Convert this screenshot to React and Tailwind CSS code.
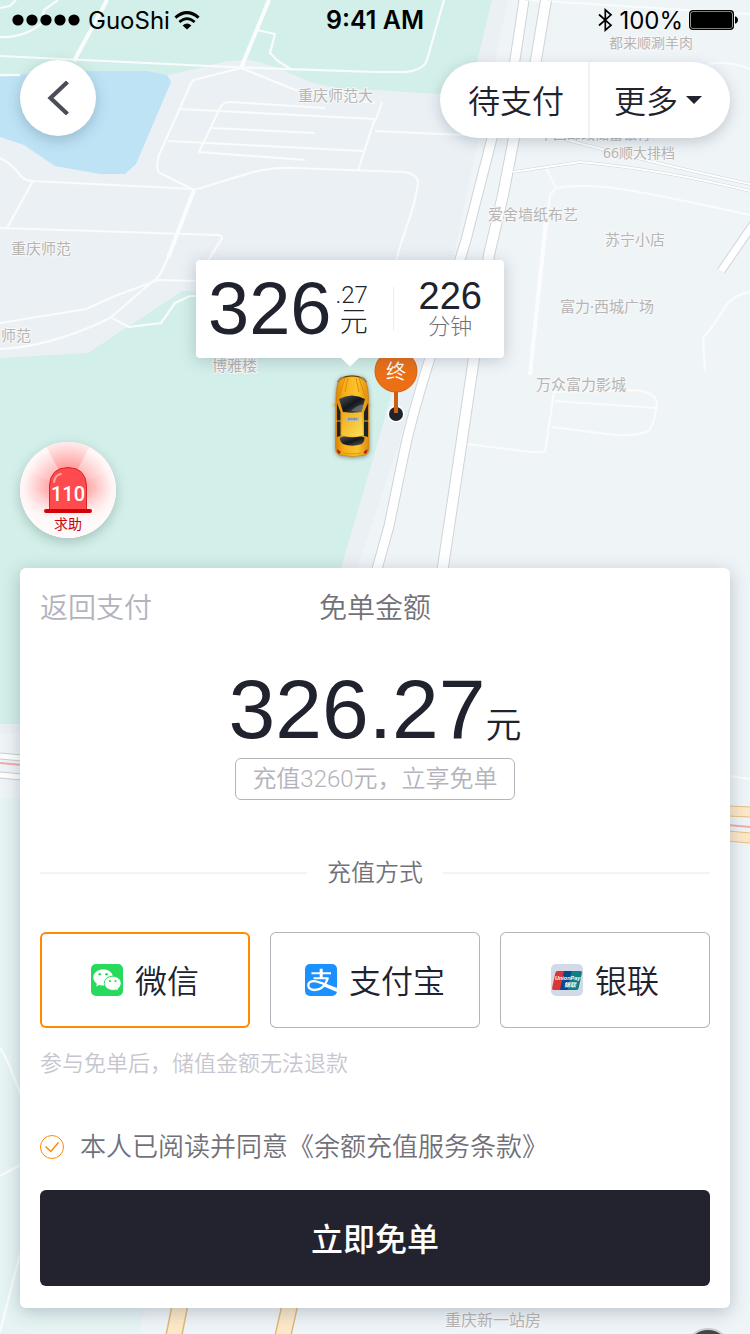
import { useState } from "react";

const MAP_LABELS = [
  { text: "都来顺涮羊肉", x: 609, y: 48, size: 14 },
  { text: "重庆师范大", x: 298, y: 101, size: 15 },
  { text: "中国邮政储蓄银行", x: 539, y: 139, size: 14 },
  { text: "66顺大排档", x: 603, y: 158, size: 14 },
  { text: "爱舍墙纸布艺", x: 488, y: 220, size: 15 },
  { text: "苏宁小店", x: 605, y: 245, size: 15 },
  { text: "重庆师范", x: 11, y: 254, size: 15 },
  { text: "富力·西城广场", x: 560, y: 312, size: 15 },
  { text: "师范", x: 1, y: 341, size: 15 },
  { text: "博雅楼", x: 212, y: 371, size: 15 },
  { text: "万众富力影城", x: 536, y: 390, size: 15 },
  { text: "重庆新一站房", x: 445, y: 1326, size: 16 },
];

const LANES = [
  "M0 56 L230 67 L375 72",
  "M107 0 L74 61",
  "M269 0 L241 68",
  "M257 30 L275 34 L270 53 L278 61 L292 70",
  "M58 0 L44 10 L43 18",
  "M0 37 C18 38 34 31 43 22",
  "M16 0 L10 6 L0 8",
  "M0 75 L20 75",
  "M241 68 L194 80 Q191 82 188 90 L159 155 Q155 170 160 173 L194 190 L166 262 Q160 278 152 282 L110 318 C70 338 30 348 0 349",
  "M241 68 L298 91 L375 103",
  "M180 109 L375 119",
  "M325 108 L230 102 Q223 102 220 108 L199 152 L305 160",
  "M211 128 L315 133",
  "M168 141 L363 151",
  "M375 118 L358 171",
  "M194 190 L250 173 Q270 167 295 168 L404 172 Q418 174 418 183 C414 215 403 230 396 262",
  "M0 158 Q12 164 20 175 Q25 181 32 181 L194 189",
  "M33 181 L7 228",
  "M0 228 L218 235 Q224 236 221 240 L207 262",
  "M0 323 L86 309 L115 296 L158 280 L196 281",
  "M112 318 L129 327 L161 323 L175 303 L190 296 L200 296",
  "M375 72 L405 72 Q424 70 427 60 L444 0",
  "M375 131 L440 134 L490 136",
  "M382 102 L375 122",
  "M546 168 L556 188 L550 195 L530 375",
  "M556 188 C600 180 660 196 750 215",
  "M527 0 L750 14",
  "M708 64 Q728 60 750 69",
  "M705 371 L703 338 L714 324 L727 304 Q736 294 750 292",
  "M467 444 L515 450 Q535 453 545 452 L554 392 L635 390 Q654 392 657 402 Q655 424 648 431 Q638 436 615 435 L552 427",
  "M555 401 L656 408",
  "M0 1048 C10 1062 14 1080 24 1102",
  "M0 1176 L22 1164",
  "M0 1332 L20 1254",
  "M730 776 L750 779",
];

function MapCanvas() {
  return (
    <svg
      className="absolute inset-0 h-full w-full"
      viewBox="0 0 750 1334"
      preserveAspectRatio="xMidYMin slice"
      aria-hidden="true"
    >
      <rect width="750" height="1334" fill="#ebf0f5" />
      <path d="M508 0 H750 V1334 H138 L357 568 L400 440 L455 250 Z" fill="#eff4f7" />
      <path d="M0 0 H492 L477 62 L466 95 L437 94 L375 90 Q330 90 305 80 Q262 60 245 60 Q225 60 200 68 L168 75 L0 77 Z" fill="#d3efe9" />
      <path d="M0 77 L60 71 L146 71 L167 75 L171 82 L136 164 L125 174 L100 174 L55 166 L24 145 L0 137 Z" fill="#bde3f5" />
      <path d="M0 358 L88 353 L182 291 L250 294 L405 345 L392 393 L375 452 L341 568 V724 H0 Z" fill="#d3efe9" />
      <rect y="733" width="22" height="65" fill="#eff4f7" />
      <path d="M0 798 H200 L138 1334 H0 Z" fill="#e6f4f3" />
      <g fill="none" stroke="#fafcfc" strokeWidth="2.2" strokeLinejoin="round">
        {LANES.map((d) => (
          <path key={d} d={d} />
        ))}
      </g>
      <g fill="none" stroke="#fbfcfd" strokeWidth="4">
        <path d="M194 190 L168 258" />
        <path d="M269 0 L241 68" />
        <path d="M107 0 L74 61" />
        <path d="M546 220 L530 375" />
      </g>
      <g fill="none">
        <g stroke="#cdd5d8">
          <path d="M524 0 L515 60 Q508 92 492 138 L466 240 L430 358 Q412 415 404 453 L389 526 L374 580" strokeWidth="11" />
          <path d="M546 0 L536 60 L514 138 L503 195 L489 255 L474 358 L460 453 L441 580" strokeWidth="12" />
          <path d="M721 271 L754 223" strokeWidth="9" />
          <path d="M513 172 L580 162 Q660 169 750 191" strokeWidth="3" />
          <path d="M560 138 Q640 160 750 184" strokeWidth="3" />
        </g>
        <g stroke="#ffffff">
          <path d="M524 0 L515 60 Q508 92 492 138 L466 240 L430 358 Q412 415 404 453 L389 526 L374 580" strokeWidth="9" />
          <path d="M546 0 L536 60 L514 138 L503 195 L489 255 L474 358 L460 453 L441 580" strokeWidth="10" />
          <path d="M721 271 L754 223" strokeWidth="7" />
          <path d="M513 172 L580 162 Q660 169 750 191" strokeWidth="2" />
          <path d="M560 138 Q640 160 750 184" strokeWidth="2" />
        </g>
      </g>
      <g fill="none">
        <path d="M0 756 L22 758 M0 775 L22 777" stroke="#c9cfd1" strokeWidth="7" />
        <path d="M0 756 L22 758 M0 775 L22 777" stroke="#ffffff" strokeWidth="5" />
        <path d="M0 763 L22 765" stroke="#f4aaa6" strokeWidth="2" />
        <path d="M728 811 L750 812 M728 836 L750 838" stroke="#e6bf82" strokeWidth="11" />
        <path d="M728 811 L750 812 M728 836 L750 838" stroke="#fde8c8" strokeWidth="9" />
        <path d="M728 825 L750 827" stroke="#f4aaa6" strokeWidth="2" />
        <path d="M181 1300 L173 1340 M291 1300 L282 1340" stroke="#e0b877" strokeWidth="17" />
        <path d="M181 1300 L173 1340 M291 1300 L282 1340" stroke="#fde8c8" strokeWidth="14" />
      </g>
      <g
        fill="#b8b4b2"
        stroke="#f6f8f9"
        strokeWidth="2"
        paintOrder="stroke"
        className="font-['Noto_Sans','Noto_Sans_CJK_SC',sans-serif] font-normal"
      >
        {MAP_LABELS.map((l) => (
          <text key={l.text} x={l.x} y={l.y} fontSize={l.size}>
            {l.text}
          </text>
        ))}
      </g>
      <circle cx="708" cy="1351" r="22" fill="#454547" stroke="#c9cbcd" strokeWidth="2" />
    </svg>
  );
}

function StatusBar() {
  return (
    <header className="relative grid h-10 grid-cols-3 items-center px-3 font-['Inter',sans-serif] text-2xl font-normal text-black">
      <div className="flex items-center gap-2">
        <svg width="68" height="12" viewBox="0 0 68 12" aria-hidden="true">
          <circle cx="6" cy="6" r="5.6" />
          <circle cx="20" cy="6" r="5.6" />
          <circle cx="34" cy="6" r="5.6" />
          <circle cx="48" cy="6" r="5.6" />
          <circle cx="62" cy="6" r="5.6" />
        </svg>
        <div className="flex items-center gap-1">
          <span className="pt-0.5">GuoShi</span>
          <svg width="26" height="19" viewBox="0 0 26 19" fill="none" stroke="#000" aria-label="Wi-Fi">
            <path d="M1.4 6.6 Q13 -3.4 24.6 6.6" strokeWidth="3" />
            <path d="M5.4 11 Q13 4.2 20.6 11" strokeWidth="2.8" />
            <path d="M8.6 14.4 Q13 10.8 17.4 14.4 L13 18.6 Z" fill="#000" stroke="none" />
          </svg>
        </div>
      </div>
      <span className="pt-0.5 text-center text-[25px] font-semibold">9:41 AM</span>
      <div className="flex items-center justify-end gap-1.5">
        <svg width="15" height="24" viewBox="0 0 15 24" fill="none" stroke="#000" strokeWidth="1.7" aria-label="蓝牙">
          <path d="M1 6.5 L13 17.2 L7.3 22.2 V1.8 L13 6.8 L1 17.5" />
        </svg>
        <span className="pt-0.5">100%</span>
        <svg width="49" height="20" viewBox="0 0 49 20" aria-label="电量">
          <rect x="0.7" y="0.7" width="43.6" height="18.6" rx="3" fill="#fff" stroke="#000" strokeWidth="1.4" />
          <rect x="2" y="2" width="41" height="16" rx="1.5" fill="#000" />
          <path d="M46 6.5 H47 Q49 7.5 49 10 Q49 12.5 47 13.5 H46 Z" />
        </svg>
      </div>
    </header>
  );
}

function TopNav() {
  return (
    <nav className="relative mt-5 flex h-[78px] justify-between px-5">
      <button
        type="button"
        aria-label="返回"
        className="flex size-[76px] items-center justify-center self-start rounded-full bg-white shadow-[0_4px_14px_rgba(60,80,100,0.28)]"
      >
        <svg width="24" height="34" viewBox="0 0 24 34" fill="none" stroke="#4c4d5b" strokeWidth="4.2">
          <path d="M21.5 1 L4.5 17 L21.5 33" />
        </svg>
      </button>
      <div className="flex h-[76px] self-end overflow-hidden rounded-full bg-white text-[32px] shadow-[0_4px_14px_rgba(60,80,100,0.25)]">
        <button type="button" className="border-r-2 border-[#f1f1f8] pl-7 pr-6 pt-1">
          待支付
        </button>
        <button type="button" className="flex items-center gap-2 pl-6 pr-7">
          <span className="pt-1">更多</span>
          <svg width="16" height="8" viewBox="0 0 16 8" fill="#20222e" aria-hidden="true">
            <path d="M0 0 H16 L8 8 Z" />
          </svg>
        </button>
      </div>
    </nav>
  );
}

function Taxi() {
  return (
    <svg
      className="absolute left-[331px] top-[236px] drop-shadow-[0_1px_2px_rgba(0,0,0,0.4)]"
      width="42"
      height="84"
      viewBox="0 0 42 84"
      aria-label="车辆位置"
    >
      <defs>
        <linearGradient id="taxi-body" x1="0" x2="1">
          <stop offset="0" stopColor="#d98307" />
          <stop offset="0.25" stopColor="#f6ae18" />
          <stop offset="0.65" stopColor="#fbc52d" />
          <stop offset="1" stopColor="#e08a08" />
        </linearGradient>
        <linearGradient id="taxi-glass" x1="0" y1="0" x2="1" y2="1">
          <stop offset="0" stopColor="#4c5257" />
          <stop offset="0.5" stopColor="#15171a" />
          <stop offset="1" stopColor="#575d61" />
        </linearGradient>
        <linearGradient id="taxi-roof" x1="0" y1="0" x2="1" y2="1">
          <stop offset="0" stopColor="#f3a916" />
          <stop offset="1" stopColor="#fae05a" />
        </linearGradient>
      </defs>
      <path d="M2 31 L7 28 V33 Z M40 31 L35 28 V33 Z" fill="#f2a412" />
      <path d="M9 4 Q21 -0.5 33 4 Q37 10 37.5 22 L38 72 Q38 80 34 81 Q21 84 9 81 Q4.5 80 4.5 72 L5 22 Q5.5 10 9 4 Z" fill="url(#taxi-body)" stroke="#c77a08" strokeWidth="0.6" />
      <path d="M6.5 8 Q8 4 14 3 L11 5 Q8 6 6.5 8 Z M35.5 8 Q34 4 28 3 L31 5 Q34 6 35.5 8 Z" fill="#dfe4e6" stroke="#574018" strokeWidth="0.6" />
      <path d="M14 2.8 Q21 1.2 28 2.8" fill="none" stroke="#5d3b08" strokeWidth="1.2" />
      <path d="M14 4 L8 22 M28 4 L34 22 M17 4 L14 18 M25 4 L28 18" stroke="#dc8507" strokeWidth="0.9" />
      <path d="M8 25 Q21 18 34 25 L30.5 38 Q21 39.5 12 38 Z" fill="url(#taxi-glass)" />
      <path d="M20 37 Q24 32 33 30 L30.5 38 Z" fill="#8d9293" opacity="0.5" />
      <path d="M6 29 L9.5 38 V62 L6 63 Z M37 29 L33 38 V62 L37 63 Z" fill="#202326" />
      <path d="M5 47 H10 M33 47 H38" stroke="#f5b020" strokeWidth="1.2" />
      <path d="M12 38.5 Q21 40 31 38.5 L32 61 Q21 64 10.5 61 Z" fill="url(#taxi-roof)" />
      <rect x="15" y="43" width="13" height="4" fill="#b3b8b7" />
      <path d="M17 45 H26" stroke="#778087" strokeWidth="1.5" strokeDasharray="2 0.5" />
      <path d="M9 64 Q10 62 14 62.5 Q21 64 29 62.5 Q33 62 33.5 64 Q34 67 31 70 Q21 73.5 12 70 Q8.5 67 9 64 Z" fill="url(#taxi-glass)" />
      <path d="M6 75 L10 78 L8 80 Q6 79 6 75 Z M36.5 75 L32.5 78 L34 80 Q36.5 79 36.5 75 Z" fill="#b31c12" />
      <path d="M12 79 Q21 81 30 79" fill="none" stroke="#d68a0b" strokeWidth="0.8" />
    </svg>
  );
}

function DestinationPin() {
  return (
    <svg className="absolute left-[373px] top-[210px]" width="46" height="76" viewBox="0 0 46 76" aria-label="终点">
      <circle cx="23" cy="66" r="8.5" fill="#fff" />
      <circle cx="23" cy="66" r="7" fill="#20222e" />
      <rect x="21" y="42" width="4" height="23" fill="#cb6011" />
      <circle cx="23" cy="23" r="21" fill="#ec6f16" stroke="#d4610f" />
      <text x="23" y="31" fontSize="20" fill="#fff" textAnchor="middle">
        终
      </text>
    </svg>
  );
}

function FareBubble() {
  return (
    <div className="absolute left-[196px] top-[122px] flex h-[98px] w-[308px] items-center justify-between rounded-[4px] bg-white pl-3 pr-[22px] shadow-[0_2px_16px_rgba(60,80,100,0.28)]">
      <div className="flex items-center gap-1">
        <span className="font-['Liberation_Sans',sans-serif] text-[74px] leading-none">326</span>
        <div className="flex flex-col items-end font-light">
          <span className="text-2xl leading-7">.27</span>
          <span className="text-[28px] leading-7">元</span>
        </div>
      </div>
      <div className="h-11 w-px bg-[#ececf3]" />
      <div className="flex flex-col items-center">
        <span className="font-['Liberation_Sans',sans-serif] text-[38px] leading-9">226</span>
        <span className="text-[22px] font-light leading-[26px] text-[#717179]">分钟</span>
      </div>
      <svg className="absolute left-[144px] top-[97px]" width="20" height="10" viewBox="0 0 20 10" fill="#fff" aria-hidden="true">
        <path d="M0 0 H20 L10 9.5 Z" />
      </svg>
    </div>
  );
}

function SosButton() {
  return (
    <button
      type="button"
      aria-label="110 求助"
      className="absolute left-5 top-[304px] size-24 rounded-full bg-white shadow-[0_4px_12px_rgba(60,90,90,0.3)]"
    >
      <svg width="96" height="96" viewBox="0 0 96 96">
        <defs>
          <radialGradient id="sos-glow" gradientUnits="userSpaceOnUse" cx="48" cy="46" r="48">
            <stop offset="0" stopColor="#ff5a5a" />
            <stop offset="0.4" stopColor="#ff8b8b" />
            <stop offset="1" stopColor="#ffe9e9" />
          </radialGradient>
          <radialGradient id="sos-side" gradientUnits="userSpaceOnUse" cx="48" cy="48" r="44">
            <stop offset="0.3" stopColor="#ff9797" />
            <stop offset="1" stopColor="#fff5f5" />
          </radialGradient>
          <linearGradient id="sos-fade" x1="0" y1="0" x2="0" y2="1">
            <stop offset="0.5" stopColor="#fffafa" stopOpacity="0" />
            <stop offset="0.82" stopColor="#fffafa" />
          </linearGradient>
          <clipPath id="sos-clip">
            <circle cx="48" cy="48" r="48" />
          </clipPath>
        </defs>
        <g clipPath="url(#sos-clip)">
          <rect width="96" height="96" fill="url(#sos-side)" />
          <path d="M48 46 L24 0 H72 Z" fill="url(#sos-glow)" opacity="0.6" />
          <path d="M48 46 L0 26 V0 H24 Z M48 46 L96 26 V0 H72 Z" fill="#fff" opacity="0.15" />
          <rect width="96" height="96" fill="url(#sos-fade)" />
        </g>
        <path d="M29.5 68 V44 Q30 26 48 25.5 Q66 26 66.5 44 V68 Z" fill="#ff4b4d" stroke="#d62327" />
        <path d="M34 40 Q35 33 41 32" fill="none" stroke="#ffa5a5" strokeWidth="2" strokeLinecap="round" />
        <rect x="24" y="67" width="48" height="4" rx="2" fill="#d10306" />
        <text x="48" y="58.5" fontSize="20" fill="#fff" textAnchor="middle" className="font-['Roboto',sans-serif] font-medium">
          110
        </text>
        <text x="48" y="87" fontSize="14" fill="#c90407" textAnchor="middle" className="font-['Noto_Sans_CJK_SC',sans-serif] font-normal">
          求助
        </text>
      </svg>
    </button>
  );
}

function WechatIcon() {
  return (
    <svg width="32" height="32" viewBox="0 0 32 32" aria-hidden="true">
      <rect width="32" height="32" rx="5" fill="#26db5c" />
      <path d="M12.3 5.2 C6.7 5.2 2.3 8.9 2.3 13.5 C2.3 16.1 3.7 18.3 5.9 19.8 L5 22.6 L8.3 20.9 Q10 21.5 12.3 21.5 C17.9 21.5 22 18 22 13.5 C22 8.9 17.9 5.2 12.3 5.2 Z" fill="#fff" />
      <path d="M21.8 12.2 C16.9 12.2 13.3 15.4 13.3 19.3 C13.3 23.3 17 26.4 21.8 26.4 Q23.4 26.4 25 25.9 L27.6 27.4 L26.9 24.9 C28.9 23.6 30.2 21.6 30.2 19.3 C30.2 15.4 26.5 12.2 21.8 12.2 Z" fill="#fff" stroke="#26db5c" strokeWidth="1" />
      <g fill="#26db5c">
        <circle cx="8.8" cy="10.3" r="1.3" />
        <circle cx="15.5" cy="10.3" r="1.3" />
        <circle cx="19" cy="17" r="1.1" />
        <circle cx="24.5" cy="17" r="1.1" />
      </g>
    </svg>
  );
}

function AlipayIcon() {
  return (
    <svg width="32" height="32" viewBox="0 0 32 32" aria-hidden="true">
      <defs>
        <clipPath id="alipay-clip">
          <rect width="32" height="32" rx="5" />
        </clipPath>
      </defs>
      <g clipPath="url(#alipay-clip)">
        <rect width="32" height="32" fill="#1b90ff" />
        <g fill="none" stroke="#fff">
          <path d="M6.5 9.2 H26 M8.5 14.3 H23.5" strokeWidth="1.9" />
          <path d="M16.2 4.8 V14.5" strokeWidth="3" />
          <path d="M22.8 14 C20.5 21.5 15.5 26 9.5 26 C5.5 26 3.3 24 3.3 21.6 C3.3 19 5.5 17.2 9 17.2 C14.5 17.2 21 21.5 33 25.5" strokeWidth="2.3" />
        </g>
        <path d="M20 20.5 L32 24 V28 L18.5 22.2 Z" fill="#fff" />
      </g>
    </svg>
  );
}

function UnionPayIcon() {
  return (
    <svg width="32" height="32" viewBox="0 0 32 32" aria-hidden="true">
      <rect width="32" height="32" rx="5" fill="#d2dae7" />
      <path d="M6.5 7 H14 L10 26 H2.5 Q0.7 26 1.1 24 L4.3 9 Q4.7 7 6.5 7 Z" fill="#d9363b" />
      <path d="M13 7 H22 L18 26 H9 Z" fill="#08498a" />
      <path d="M20.5 7 H29.5 Q31.3 7 30.9 9 L27.7 24 Q27.3 26 25.5 26 H16.5 Z" fill="#0d8185" />
      <g fill="#fff" fontStyle="italic" fontWeight="700">
        <text x="4" y="15.5" fontSize="5.5" className="font-['Liberation_Sans',sans-serif]">
          UnionPay
        </text>
        <text x="13" y="22.5" fontSize="6" className="font-['Noto_Sans_CJK_SC',sans-serif]">
          银联
        </text>
      </g>
    </svg>
  );
}

const METHODS = [
  { id: "wechat", name: "微信", Icon: WechatIcon },
  { id: "alipay", name: "支付宝", Icon: AlipayIcon },
  { id: "unionpay", name: "银联", Icon: UnionPayIcon },
];

function PaymentSheet() {
  const [method, setMethod] = useState("wechat");
  const [agreed, setAgreed] = useState(true);

  return (
    <main className="relative mx-5 mb-[26px] rounded-[6px] bg-white px-5 pb-[22px] pt-5 shadow-[0_4px_18px_rgba(60,80,100,0.3)]">
      <div className="grid h-10 grid-cols-3 items-center text-[28px]">
        <button type="button" className="justify-self-start text-[#b3b3bc]">
          返回支付
        </button>
        <h1 className="text-center text-[#717179]">免单金额</h1>
      </div>

      <div className="mt-9 flex flex-col items-center gap-1">
        <p className="flex h-[90px] items-baseline">
          <span className="font-['Liberation_Sans',sans-serif] text-[84px] leading-[90px]">326.27</span>
          <span className="text-4xl">元</span>
        </p>
        <p className="flex h-[42px] w-[280px] items-center justify-center rounded-[6px] border border-[#b3b3bc] text-2xl text-[#b3b3bc]">
          充值3260元，立享免单
        </p>
      </div>

      <fieldset>
        <legend className="flex w-full items-center gap-5 pb-[39px] pt-[53px] text-2xl leading-10 text-[#717179]">
          <span className="h-0.5 flex-1 bg-[#f3f3f9]" />
          充值方式
          <span className="h-0.5 flex-1 bg-[#f3f3f9]" />
        </legend>
        <div className="grid grid-cols-3 gap-5">
          {METHODS.map(({ id, name, Icon }) => (
            <label
              key={id}
              className="flex h-24 cursor-pointer items-center justify-center gap-3 rounded-[6px] text-[32px] ring-1 ring-inset ring-[#b3b3bc] has-checked:ring-2 has-checked:ring-[#ff8a00]"
            >
              <input
                type="radio"
                name="method"
                value={id}
                checked={method === id}
                onChange={() => setMethod(id)}
                className="sr-only"
              />
              <Icon />
              <span className="pt-1">{name}</span>
            </label>
          ))}
        </div>
      </fieldset>

      <p className="mt-5 text-[22px] leading-8 text-[#c6c6d0]">参与免单后，储值金额无法退款</p>

      <label className="mt-[47px] flex items-center gap-4 text-[26px] leading-10 text-[#717179]">
        <span className="relative size-6">
          <input
            type="checkbox"
            checked={agreed}
            onChange={(e) => setAgreed(e.target.checked)}
            className="peer block size-6 appearance-none rounded-full border border-[#b3b3bc] checked:border-[#ff8a00]"
          />
          <svg
            className="pointer-events-none absolute inset-0 hidden peer-checked:block"
            width="24"
            height="24"
            viewBox="0 0 24 24"
            fill="none"
            stroke="#ff8a00"
            strokeWidth="1.5"
            aria-hidden="true"
          >
            <path d="M5.5 11.5 L10.8 16.5 L18.5 7.5" />
          </svg>
        </span>
        本人已阅读并同意《余额充值服务条款》
      </label>

      <button type="button" className="mt-[23px] h-24 w-full rounded-[6px] bg-[#22232e] pt-1 text-[32px] font-medium text-white">
        立即免单
      </button>
    </main>
  );
}

export default function App() {
  return (
    <div className="relative flex min-h-screen flex-col overflow-hidden font-['Roboto','Noto_Sans_CJK_SC',sans-serif] font-[350] text-[#20222e]">
      <MapCanvas />
      <StatusBar />
      <TopNav />
      <section aria-label="行程地图" className="relative min-h-[430px] flex-1">
        <Taxi />
        <DestinationPin />
        <FareBubble />
        <SosButton />
      </section>
      <PaymentSheet />
    </div>
  );
}
